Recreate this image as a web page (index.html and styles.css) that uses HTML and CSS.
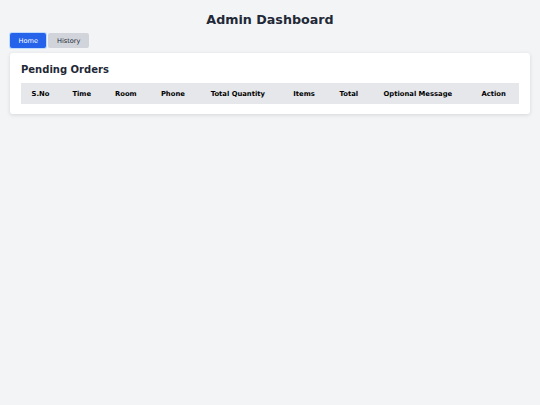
FILE: index.html
```html
<!DOCTYPE html>
<html>
<head>
<meta charset="utf-8">
<link rel="stylesheet" href="styles.css">
</head>
<body>
<div class="page">
  <h1 class="title">Admin Dashboard</h1>
  <nav class="tabs">
    <button class="tab tab-active">Home</button>
    <button class="tab">History</button>
  </nav>
  <section class="card">
    <h2 class="card-title">Pending Orders</h2>
    <table class="orders">
      <colgroup>
        <col class="c-sno">
        <col class="c-time">
        <col class="c-room">
        <col class="c-phone">
        <col class="c-qty">
        <col class="c-items">
        <col class="c-total">
        <col class="c-msg">
        <col class="c-action">
      </colgroup>
      <thead>
        <tr>
          <th>S.No</th>
          <th>Time</th>
          <th>Room</th>
          <th>Phone</th>
          <th>Total Quantity</th>
          <th>Items</th>
          <th>Total</th>
          <th>Optional Message</th>
          <th>Action</th>
        </tr>
      </thead>
      <tbody></tbody>
    </table>
  </section>
</div>
</body>
</html>
```
FILE: styles.css
```css
html, body {
  margin: 0;
  padding: 0;
  background: #f3f4f6;
  font-family: "DejaVu Sans", sans-serif;
  color: #1f2937;
}
.page {
  padding: 10px 10px;
}
.title {
  margin: 0;
  text-align: center;
  font-size: 12.7px;
  font-weight: bold;
  line-height: 16px;
  padding-top: 2px;
}
.tabs {
  display: flex;
  gap: 2px;
  margin-top: 5px;
}
.tab {
  font-family: "DejaVu Sans", sans-serif;
  font-size: 6.6px;
  height: 15px;
  padding: 0 8.5px;
  border: none;
  border-radius: 2px;
  background: #d1d5db;
  color: #1f2937;
}
.tab-active {
  background: #2563eb;
  color: #ffffff;
  box-shadow: 0 0 0 1px #bfdbfe;
}
.card {
  margin-top: 5px;
  background: #ffffff;
  border-radius: 3px;
  box-shadow: 0 1px 4px rgba(0,0,0,0.12);
  padding: 10px 11px 10px 11px;
}
.card-title {
  margin: 0 0 7px 0;
  font-size: 10px;
  font-weight: bold;
  line-height: 13px;
  color: #1f2937;
}
.orders {
  width: 100%;
  border-collapse: collapse;
  table-layout: fixed;
}
.c-sno { width: 7.8%; }
.c-time { width: 8.8%; }
.c-room { width: 8.9%; }
.c-phone { width: 10%; }
.c-qty { width: 16.1%; }
.c-items { width: 10.5%; }
.c-total { width: 7.5%; }
.c-msg { width: 20.2%; }
.c-action { width: 10.2%; }
.orders th {
  background: #e5e7eb;
  color: #000;
  font-size: 6.8px;
  font-weight: bold;
  height: 21px;
  padding: 0;
  text-align: center;
  white-space: nowrap;
}
```
